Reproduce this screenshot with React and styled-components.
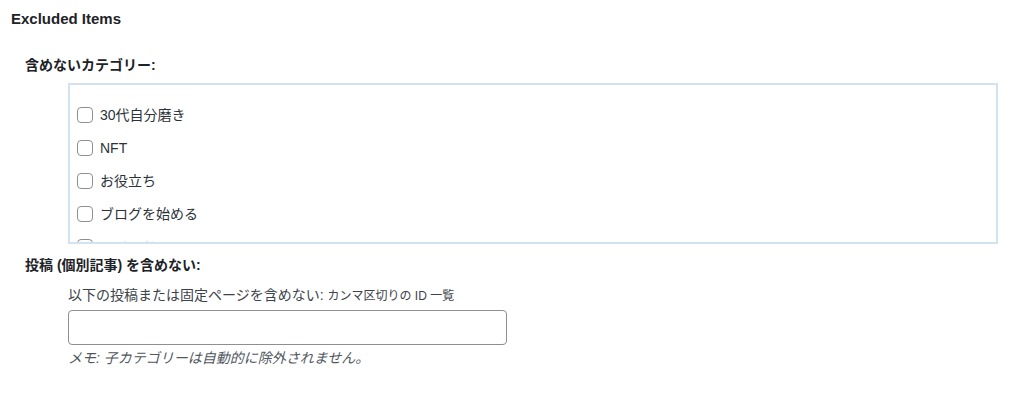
import React from "react";
import styled, { createGlobalStyle } from "styled-components";

const GlobalStyle = createGlobalStyle`
  html, body {
    margin: 0;
    padding: 0;
    background: #ffffff;
  }
  body {
    font-family: "Liberation Sans", "Noto Sans CJK JP", sans-serif;
    color: #1d2327;
  }
`;

const Page = styled.div`
  padding: 10px 0 0 11px;
  width: 1013px;
  height: 400px;
  box-sizing: border-box;
`;

const Title = styled.h2`
  margin: 0;
  font-size: 15px;
  line-height: 18px;
  font-weight: 700;
  color: #1d2327;
`;

const FieldBlock = styled.div`
  padding-left: 14px;
  display: flex;
  flex-direction: column;
  align-items: flex-start;
`;

const FieldLabel = styled.div`
  margin-top: ${(p) => p.$top}px;
  font-size: 14px;
  line-height: 20px;
  font-weight: 700;
  color: #1d2327;
`;

const Checklist = styled.ul`
  margin: 8px 0 0 43px;
  padding: 22px 0 0 7px;
  list-style: none;
  width: 930px;
  height: 161px;
  box-sizing: border-box;
  border: 2px solid #d3e2ef;
  overflow: hidden;
`;

const Item = styled.li`
  display: flex;
  align-items: center;
  height: 16px;
  margin-bottom: 17px;
  font-size: 14px;
  line-height: 16px;
  color: #2c3338;
`;

const Box = styled.span`
  width: 16px;
  height: 16px;
  box-sizing: border-box;
  border: 1px solid #8c8f94;
  border-radius: 4px;
  background: #fff;
  margin-right: 7px;
  flex: none;
`;

const Indent = styled.div`
  margin-left: 43px;
  display: flex;
  flex-direction: column;
  align-items: flex-start;
`;

const Desc = styled.div`
  margin-top: 10px;
  font-size: 14px;
  line-height: 20px;
  color: #3c434a;
`;

const Small = styled.span`
  font-size: 12px;
`;

const TextInput = styled.input`
  margin: 4px 0 0 0;
  width: 439px;
  height: 35px;
  box-sizing: border-box;
  border: 1px solid #8c8f94;
  border-radius: 4px;
  background: #fff;
  padding: 0 8px;
  font-size: 14px;
  outline: none;
`;

const Note = styled.div`
  margin-top: 3px;
  font-size: 14px;
  line-height: 20px;
  font-style: italic;
  color: #50575e;
`;

const categories = ["30代自分磨き", "NFT", "お役立ち", "ブログを始める", "マインド"];

export default function App() {
  return (
    <>
      <GlobalStyle />
      <Page>
        <Title>Excluded Items</Title>
        <FieldBlock>
          <FieldLabel $top={27}>含めないカテゴリー:</FieldLabel>
          <Checklist>
            {categories.map((c) => (
              <Item key={c}>
                <Box />
                {c}
              </Item>
            ))}
          </Checklist>
          <FieldLabel $top={11}>投稿 (個別記事) を含めない:</FieldLabel>
          <Indent>
            <Desc>
              以下の投稿または固定ページを含めない: <Small>カンマ区切りの ID 一覧</Small>
            </Desc>
            <TextInput type="text" />
            <Note>メモ: 子カテゴリーは自動的に除外されません。</Note>
          </Indent>
        </FieldBlock>
      </Page>
    </>
  );
}
